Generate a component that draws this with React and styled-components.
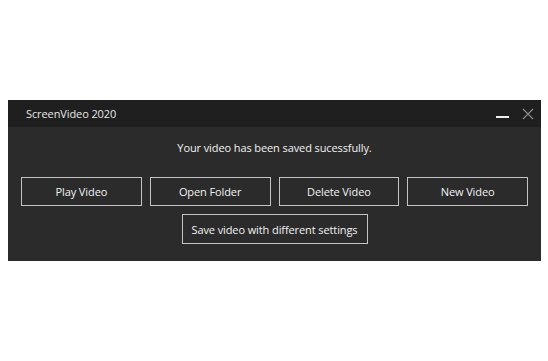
import React from 'react';
import styled, { createGlobalStyle } from 'styled-components';

const GlobalStyle = createGlobalStyle`
  html, body {
    margin: 0;
    padding: 0;
    background: #ffffff;
  }
  body {
    font-family: "Open Sans", "Noto Sans", sans-serif;
  }
`;

const Page = styled.div`
  width: 548px;
  height: 361px;
  padding: 100px 0 0 8px;
  box-sizing: border-box;
`;

const Window = styled.div`
  width: 533px;
  display: flex;
  flex-direction: column;
  background: #2b2b2b;
  color: #ffffff;
  font-size: 11px;
`;

const TitleBar = styled.div`
  height: 27px;
  display: flex;
  align-items: center;
  justify-content: space-between;
  background: #1f1f1f;
  padding: 0 7px 0 18px;
`;

const Title = styled.span`
  color: #e6e6e6;
  font-size: 11px;
  letter-spacing: -0.1px;
`;

const Controls = styled.div`
  display: flex;
  align-items: center;
  gap: 12px;
`;

const ControlButton = styled.button`
  background: none;
  border: 0;
  padding: 0;
  width: 13px;
  height: 13px;
  display: flex;
  align-items: center;
  justify-content: center;
`;

const Body = styled.div`
  display: flex;
  flex-direction: column;
  align-items: center;
  padding: 12px 13px 17px;
`;

const Message = styled.p`
  margin: 0 0 20px;
  line-height: 18px;
  color: #f2f2f2;
  letter-spacing: -0.1px;
`;

const ButtonRow = styled.div`
  width: 100%;
  display: grid;
  grid-template-columns: repeat(4, 1fr);
  gap: 8px;
  margin-bottom: 8px;
`;

const ActionButton = styled.button`
  height: ${({ $wide }) => ($wide ? '30px' : '29px')};
  width: ${({ $wide }) => ($wide ? '186px' : 'auto')};
  padding: 0;
  background: transparent;
  border: 1px solid #c4c4c4;
  color: #f2f2f2;
  font-family: inherit;
  font-size: 11px;
  letter-spacing: -0.1px;
  cursor: pointer;
`;

const App = () => {
  return (
    <Page>
      <GlobalStyle />
      <Window>
        <TitleBar>
          <Title>ScreenVideo 2020</Title>
          <Controls>
            <ControlButton aria-label="Minimize">
              <svg width="13" height="13" viewBox="0 0 13 13">
                <rect x="0" y="9" width="13" height="2" fill="#f0f0f0" />
              </svg>
            </ControlButton>
            <ControlButton aria-label="Close">
              <svg width="12" height="12" viewBox="0 0 12 12">
                <path d="M1 1L11 11M11 1L1 11" stroke="#8a8a8a" strokeWidth="1.2" />
              </svg>
            </ControlButton>
          </Controls>
        </TitleBar>
        <Body>
          <Message>Your video has been saved sucessfully.</Message>
          <ButtonRow>
            <ActionButton>Play Video</ActionButton>
            <ActionButton>Open Folder</ActionButton>
            <ActionButton>Delete Video</ActionButton>
            <ActionButton>New Video</ActionButton>
          </ButtonRow>
          <ActionButton $wide>Save video with different settings</ActionButton>
        </Body>
      </Window>
    </Page>
  );
};

export default App;
